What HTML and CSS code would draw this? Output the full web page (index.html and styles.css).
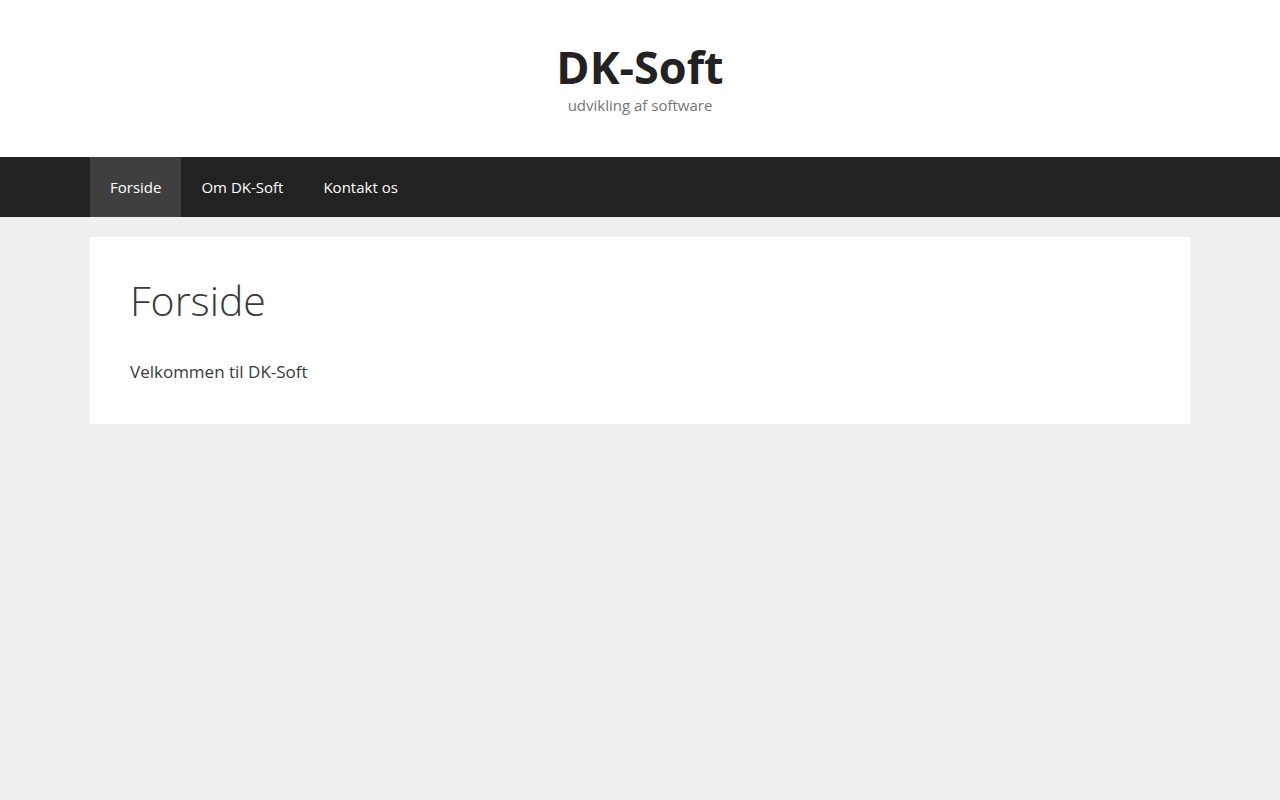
FILE: index.html
```html
<!DOCTYPE html>
<html lang="da">
<head>
<meta charset="utf-8">
<title>DK-Soft</title>
<link rel="stylesheet" href="styles.css">
</head>
<body>
<header class="site-header">
  <div class="site-branding">
    <p class="site-title">DK-Soft</p>
    <p class="site-description">udvikling af software</p>
  </div>
</header>
<nav class="main-navigation">
  <ul class="menu">
    <li class="current"><a href="#">Forside</a></li>
    <li><a href="#">Om DK-Soft</a></li>
    <li><a href="#">Kontakt os</a></li>
  </ul>
</nav>
<main class="site-content">
  <article class="page">
    <h1 class="entry-title">Forside</h1>
    <div class="entry-content">
      <p>Velkommen til DK-Soft</p>
    </div>
  </article>
</main>
</body>
</html>
```

FILE: styles.css
```css
* { box-sizing: border-box; }
html, body { margin: 0; padding: 0; }
body {
  background: #efefef;
  font-family: "Open Sans", "Liberation Sans", sans-serif;
  font-size: 17px;
  line-height: 1.5;
  color: #3a3a3a;
}
.site-header {
  background: #fff;
  padding: 40px 0;
  text-align: center;
}
.site-title {
  margin: 0;
  font-size: 45px;
  font-weight: 700;
  line-height: 1.2;
  color: #222;
}
.site-description {
  margin: 0;
  font-size: 15px;
  line-height: 1.5;
  color: #757575;
}
.main-navigation {
  background: #222;
}
.menu {
  list-style: none;
  margin: 0 auto;
  padding: 0;
  width: 1100px;
  display: flex;
}
.menu a {
  display: block;
  padding: 0 20px;
  line-height: 60px;
  font-size: 15px;
  color: #fff;
  text-decoration: none;
}
.menu .current a {
  background: #3f3f3f;
}
.site-content {
  width: 1100px;
  margin: 20px auto 0;
}
.page {
  background: #fff;
  padding: 40px;
}
.entry-title {
  margin: 0;
  font-size: 41px;
  font-weight: 300;
  line-height: 46px;
  color: #3a3a3a;
}
.entry-content {
  margin-top: 36px;
}
.entry-content p {
  margin: 0;
}
```
